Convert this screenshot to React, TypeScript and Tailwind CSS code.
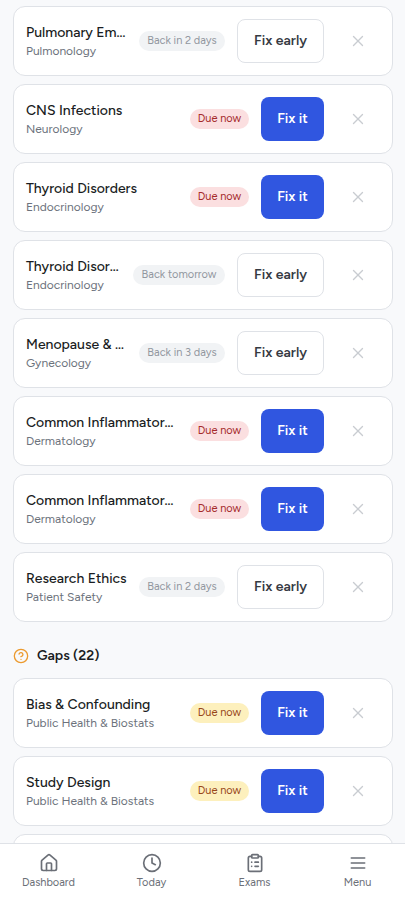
import { X, House, Clock, ClipboardList, CircleQuestionMark } from "lucide-react";

type Tone = "red" | "amber" | "gray";
type Item = { title: string; subject: string; status: string; tone: Tone };

const mistakes: Item[] = [
  { title: "Pulmonary Em…", subject: "Pulmonology", status: "Back in 2 days", tone: "gray" },
  { title: "CNS Infections", subject: "Neurology", status: "Due now", tone: "red" },
  { title: "Thyroid Disorders", subject: "Endocrinology", status: "Due now", tone: "red" },
  { title: "Thyroid Disor…", subject: "Endocrinology", status: "Back tomorrow", tone: "gray" },
  { title: "Menopause & …", subject: "Gynecology", status: "Back in 3 days", tone: "gray" },
  { title: "Common Inflammator…", subject: "Dermatology", status: "Due now", tone: "red" },
  { title: "Common Inflammator…", subject: "Dermatology", status: "Due now", tone: "red" },
  { title: "Research Ethics", subject: "Patient Safety", status: "Back in 2 days", tone: "gray" },
];

const gaps: Item[] = [
  { title: "Bias & Confounding", subject: "Public Health & Biostats", status: "Due now", tone: "amber" },
  { title: "Study Design", subject: "Public Health & Biostats", status: "Due now", tone: "amber" },
];

const toneClass: Record<Tone, string> = {
  red: "bg-[#fbdfe0] text-[#a52a2a]",
  amber: "bg-[#fdf0bd] text-[#984719]",
  gray: "bg-[#f1f3f5] text-[#92979f]",
};

function pillWidth(item: Item) {
  if (item.tone !== "gray") return "w-[59px]";
  return item.status === "Back tomorrow" ? "w-[92px]" : "w-[86px]";
}

function MenuIcon() {
  return (
    <svg width="20" height="20" viewBox="0 0 24 24" fill="none" stroke="currentColor" strokeWidth="2" strokeLinecap="round">
      <path d="M4 6h16M4 12h16M4 18h16" />
    </svg>
  );
}

function Row({ item }: { item: Item }) {
  const early = item.tone === "gray";
  return (
    <li className="flex h-[70px] shrink-0 items-center rounded-xl border border-[#dfe2e7] bg-white p-3">
      <div className="min-w-0 flex-1 whitespace-nowrap">
        <p className="text-[14px] leading-5 font-medium text-[#191c22]">{item.title}</p>
        <p className="text-[12px] leading-4 text-[#6c727c]">{item.subject}</p>
      </div>
      <span className={`mr-3 flex h-5 shrink-0 items-center justify-center rounded-full text-[11px] whitespace-nowrap ${pillWidth(item)} ${toneClass[item.tone]}`}>
        {item.status}
      </span>
      <button
        className={
          early
            ? "h-11 w-[87px] shrink-0 rounded-lg border border-[#dfe2e7] bg-white pb-0.5 text-[14px] font-semibold text-[#363a42]"
            : "h-11 w-[63px] shrink-0 rounded-lg bg-[#3056e0] pb-0.5 text-[14px] font-semibold text-white"
        }
      >
        {early ? "Fix early" : "Fix it"}
      </button>
      <button aria-label="Dismiss" className="ml-3 flex size-11 shrink-0 items-center justify-center text-[#c9ccd1]">
        <X size={18} strokeWidth={1.8} />
      </button>
    </li>
  );
}

const tabs = [
  { label: "Dashboard", icon: <House size={20} /> },
  { label: "Today", icon: <Clock size={20} /> },
  { label: "Exams", icon: <ClipboardList size={20} /> },
  { label: "Menu", icon: <MenuIcon /> },
];

export default function App() {
  return (
    <div className="flex h-[898px] w-[405px] flex-col overflow-hidden bg-[#f8f9fb] font-['Figtree','Lato','Liberation_Sans',sans-serif]">
      <main className="min-h-0 flex-1 overflow-hidden pt-1.5 pr-3 pl-[13px]">
        <ul className="flex flex-col gap-2">
          {mistakes.map((item, i) => <Row key={i} item={item} />)}
        </ul>
        <h2 className="mt-6 mb-3 flex h-5 items-center gap-2 text-[14px] leading-5 font-semibold text-[#191c22]">
          <CircleQuestionMark size={16} className="text-[#ec9a2e]" />
          Gaps (22)
        </h2>
        <ul className="flex flex-col gap-2">
          {gaps.map((item, i) => <Row key={i} item={item} />)}
          <li className="h-[70px] shrink-0 rounded-xl border border-[#dfe2e7] bg-white" />
        </ul>
      </main>
      <nav className="flex h-[55px] shrink-0 justify-center border-t border-[#dfe2e7] bg-white pt-[9px] pl-px text-[#6b6f77]">
        {tabs.map(({ label, icon }) => (
          <a key={label} className="flex w-[103px] shrink-0 flex-col items-center gap-0.5">
            {icon}
            <span className="text-[11px] leading-4">{label}</span>
          </a>
        ))}
      </nav>
    </div>
  );
}
